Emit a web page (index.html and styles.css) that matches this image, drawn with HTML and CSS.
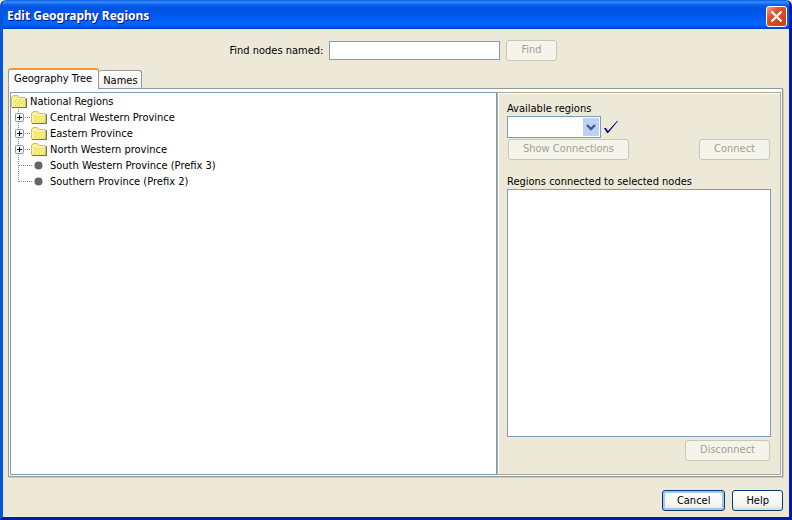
FILE: index.html
```html
<!DOCTYPE html>
<html lang="en">
    <head>
        <meta charset="UTF-8">
        <title>Edit Geography Regions</title>
        <link rel="stylesheet" href="styles.css">
    </head>
    <body>
        <!-- shared shapes for the tree -->
        <svg class="symbols" width="0" height="0">
            <symbol id="folder" viewBox="0 0 17 16">
                <path d="M1 4h1v-1h5v1h1v1h6v9H1z" fill="#f5ee7e"/>
                <path d="M0 4h1v10H0zM1 3h1v1H1zM2 2h5v1H2zM7 3h1v1H7zM8 4h6v1H8z" fill="#c9c06a"/>
                <path d="M1 5h13v1H1zM1 5h1v8H1z" fill="#faf6b0"/>
                <path d="M4 8h1v1H4zM8 8h1v1H8zM12 8h1v1h-1zM6 10h1v1H6zM10 10h1v1h-1zM4 12h1v1H4zM8 12h1v1H8zM12 12h1v1h-1z" fill="#dfd45c"/>
                <path d="M14 5h1v9h-1z" fill="#c9c06a"/>
                <path d="M15 5h1v10H1v-1h14z" fill="#77735a"/>
            </symbol>
            <symbol id="plus" viewBox="0 0 20 16">
                <path d="M7.5 0v16M8 8.5h12" fill="none" stroke="#8a8a7a" stroke-dasharray="1 1"/>
                <rect x="4.5" y="4.5" width="8" height="8" rx="1" fill="#f4f3ee" stroke="#7898b5"/>
                <path d="M6 8h5v1H6zM8 6h1v5H8z" fill="#000"/>
            </symbol>
            <symbol id="branch" viewBox="0 0 20 16">
                <path d="M7.5 0v16M8 8.5h14" fill="none" stroke="#8a8a7a" stroke-dasharray="1 1"/>
            </symbol>
            <symbol id="last" viewBox="0 0 20 16">
                <path d="M7.5 0v9M8 8.5h14" fill="none" stroke="#8a8a7a" stroke-dasharray="1 1"/>
            </symbol>
            <symbol id="dot" viewBox="0 0 17 16">
                <circle cx="7.5" cy="8.5" r="4" fill="#666"/>
            </symbol>
        </svg>

        <div class="window">
            <header class="titlebar">
                <h1>Edit Geography Regions</h1>
                <button class="close" type="button" aria-label="Close">
                    <svg width="19" height="19" viewBox="0 0 19 19">
                        <path d="M4.5 4.5l10 10M14.5 4.5l-10 10" stroke="#fff" stroke-width="2.4"/>
                    </svg>
                </button>
            </header>

            <form class="find">
                <label for="findInput">Find nodes named:</label>
                <input type="text" id="findInput">
                <button class="btn" type="button" disabled>Find</button>
            </form>

            <div class="tabs" role="tablist">
                <button class="tab active" type="button" role="tab" aria-selected="true">Geography Tree</button>
                <button class="tab" type="button" role="tab" aria-selected="false">Names</button>
            </div>

            <main class="pane">
                <div class="tree">
                    <div class="row"><svg class="icon"><use href="#folder"/></svg><span>National Regions</span></div>
                    <ul>
                        <li class="row"><button class="toggle" type="button" aria-label="Expand"><svg class="line"><use href="#plus"/></svg></button><svg class="icon"><use href="#folder"/></svg><span>Central Western Province</span></li>
                        <li class="row"><button class="toggle" type="button" aria-label="Expand"><svg class="line"><use href="#plus"/></svg></button><svg class="icon"><use href="#folder"/></svg><span>Eastern Province</span></li>
                        <li class="row"><button class="toggle" type="button" aria-label="Expand"><svg class="line"><use href="#plus"/></svg></button><svg class="icon"><use href="#folder"/></svg><span>North Western province</span></li>
                        <li class="row"><svg class="line"><use href="#branch"/></svg><svg class="icon"><use href="#dot"/></svg><span>South Western Province (Prefix 3)</span></li>
                        <li class="row"><svg class="line"><use href="#last"/></svg><svg class="icon"><use href="#dot"/></svg><span>Southern Province (Prefix 2)</span></li>
                    </ul>
                </div>

                <section class="regions">
                    <label for="available">Available regions</label>
                    <div class="pick">
                        <div class="combo">
                            <select id="available"><option></option></select>
                            <svg class="arrow" width="16" height="18" viewBox="0 0 16 18">
                                <rect width="16" height="18" rx="1" fill="#bcd0f8"/>
                                <path d="M4 7l4 4 4-4" fill="none" stroke="#43588c" stroke-width="2.4"/>
                            </svg>
                        </div>
                        <svg width="14" height="13" viewBox="0 0 14 13">
                            <path d="M0 7h2l2 3 9-10h1l-9 11-1 1H3z" fill="#000080"/>
                        </svg>
                    </div>
                    <div class="actions">
                        <button class="btn" type="button" disabled>Show Connections</button>
                        <button class="btn" type="button" disabled>Connect</button>
                    </div>
                    <label class="listLabel" for="connected">Regions connected to selected nodes</label>
                    <select class="list" id="connected" size="10"></select>
                    <div class="actions end">
                        <button class="btn" type="button" disabled>Disconnect</button>
                    </div>
                </section>
            </main>

            <footer class="footer">
                <button class="btn default" type="button">Cancel</button>
                <button class="btn" type="button">Help</button>
            </footer>
        </div>
    </body>
</html>
```

FILE: styles.css
```css
* {
    box-sizing: border-box;
}
body {
    margin: 0;
    background: #ece9d8;
}
body, button, input, select {
    font-family: "DejaVu Sans Condensed", "DejaVu Sans", Tahoma, sans-serif;
    font-size: 11px;
    line-height: 14px;
    color: #000;
}
.symbols {
    position: absolute;
}
.symbols symbol {
    overflow: visible;
}
.window {
    display: flex;
    flex-direction: column;
    min-height: 100vh;
    background: #ece9d8;
    border: solid;
    border-width: 0 3px 3px;
    border-color: #0831d9 #001ea0 #001ea0 #0855dd;
    border-radius: 6px 6px 0 0;
    overflow: hidden;
}

/* title bar */
.titlebar {
    display: flex;
    align-items: center;
    justify-content: space-between;
    height: 29px;
    margin: 0 -3px;
    padding: 3px 5px 0 7px;
    background: linear-gradient(#0a5be0 0, #3a8cff 2px, #0560ec 5px, #0053e1 9px, #0058ee 16px, #0066ff 23px, #005bf0 26px, #003fc4 29px);
}
.titlebar h1 {
    margin: 0;
    font-family: "Noto Sans", sans-serif;
    font-size: 12px;
    font-weight: bold;
    line-height: 18px;
    color: #fff;
    text-shadow: 1px 1px #0f1089;
}
.close {
    display: flex;
    width: 21px;
    height: 21px;
    padding: 0;
    border: 1px solid #fff;
    border-radius: 3px;
    background: linear-gradient(135deg, #f0a088, #e0502c 35%, #cc3a10);
}

/* controls */
.btn {
    height: 21px;
    padding: 0 13px;
    border: 1px solid #003c74;
    border-radius: 3px;
    background: linear-gradient(#fff, #f3f2ec 80%, #dcd8cc);
}
.btn:disabled {
    padding: 0 14px 2px;
    border-color: #c9c7ba;
    background: #f5f4ea;
    color: #a1a192;
}
.btn.default {
    padding: 0 14px;
    box-shadow: inset 0 0 0 2px #a6c2f0;
}
input, select {
    border: 1px solid #7f9db9;
    border-radius: 0;
    background: #fff;
}
.find {
    display: flex;
    justify-content: center;
    align-items: center;
    gap: 6px;
    padding: 11px 6px 7px 0;
}
.find input {
    width: 171px;
    height: 19px;
}

/* tabs */
.tabs {
    display: flex;
    align-items: flex-end;
    height: 20px;
    padding: 0 5px;
}
.tab {
    height: 18px;
    padding: 2px 3px 0 4px;
    border: 1px solid #919b9c;
    border-width: 1px 1px 0 0;
    border-radius: 3px 3px 0 0;
    background: linear-gradient(#fff, #f0efe8);
}
.tab.active {
    height: 21px;
    margin-bottom: -1px;
    padding: 0 6px 2px 5px;
    border: 1px solid #919b9c;
    border-top: 2px solid #f09a2c;
    border-bottom: 0;
    background: #fcfcfe;
    z-index: 1;
}

/* tab content */
.pane {
    display: flex;
    flex: 1;
    margin: 0 6px 0 5px;
    padding: 3px 1px 1px;
    border: 1px solid #919b9c;
    background: #fcfcfe;
    box-shadow: 1px 1px #d0cebf;
}
.tree {
    flex: 1;
    border: 1px solid #7f9db9;
    background: #fff;
}
.tree ul {
    margin: 0;
    padding: 0;
    list-style: none;
}
.row {
    display: flex;
    align-items: center;
    height: 16px;
}
.row span {
    padding-top: 2px;
}
.icon {
    width: 17px;
    height: 16px;
    margin-right: 2px;
}
.line {
    display: block;
    width: 20px;
    height: 16px;
    overflow: visible;
}
.toggle {
    padding: 0;
    border: 0;
    background: none;
}
.regions {
    display: flex;
    flex-direction: column;
    width: 284px;
    padding: 9px 9px 13px;
    border: 1px solid #aca899;
    background: #ece9d8;
    box-shadow: inset 1px 1px #fff;
}
.pick {
    display: flex;
    align-items: center;
    gap: 3px;
}
.combo {
    position: relative;
}
.combo select {
    display: block;
    width: 94px;
    height: 22px;
    appearance: none;
}
.arrow {
    position: absolute;
    top: 2px;
    right: 2px;
    pointer-events: none;
}
.actions {
    display: flex;
    justify-content: space-between;
    padding: 1px 1px 0;
}
.actions.end {
    justify-content: flex-end;
    padding-top: 3px;
}
.listLabel {
    margin-top: 15px;
}
.list {
    flex: 1;
    width: 100%;
}

.footer {
    display: flex;
    justify-content: flex-end;
    gap: 7px;
    padding: 13px 6px 6px;
}
```
